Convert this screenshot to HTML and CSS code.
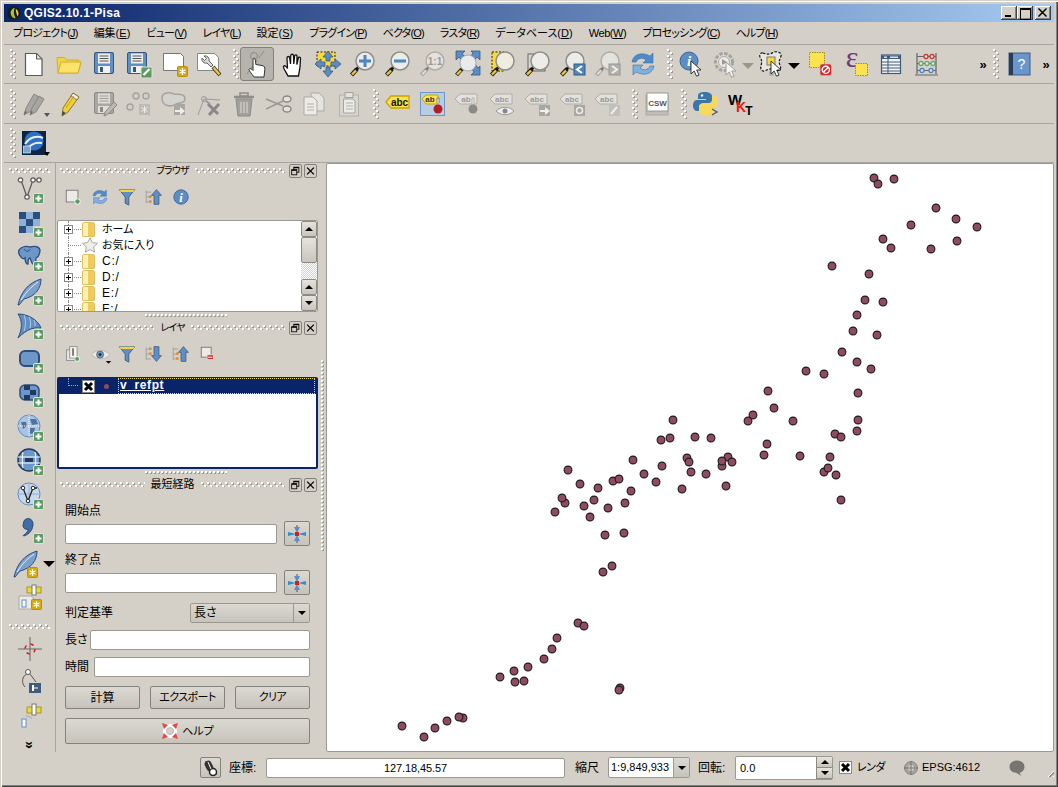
FILE: index.html
```html
<!DOCTYPE html>
<html lang="ja">
<head>
<meta charset="utf-8">
<title>QGIS2.10.1-Pisa</title>
<link rel="stylesheet" href="styles.css">
</head>
<body>
<svg class="defs" aria-hidden="true">
<defs>
<g id="g-plus"><rect x=".5" y=".5" width="10" height="10" rx="1.5" fill="#5b9a62" stroke="#d8e8d8"/><path d="M5.5 2.5v6M2.5 5.5h6" stroke="#fff" stroke-width="2"/></g>
<g id="g-star"><rect x=".5" y=".5" width="10" height="10" rx="1" fill="#d6a70e" stroke="#b8900c"/><path d="M5.5 2v7M2.5 3.7l6 3.6M8.500 3.700l-6 3.600" stroke="#fff" stroke-width="1.200"/></g>
<g id="g-floppy"><rect x="4.500" y="2.500" width="19" height="21" rx="1.500" fill="#5f8fc6" stroke="#36587f"/><rect x="8" y="3.500" width="12" height="10" fill="#eeeeea"/><path d="M9.500 6h9M9.500 8.500h9M9.500 11h9" stroke="#555"/><rect x="8" y="16" width="12" height="7" fill="#f2f2f2"/><rect x="10" y="17" width="3" height="5" fill="#36587f"/></g>
<g id="g-floppyg"><rect x="4.500" y="2.500" width="19" height="21" rx="1.500" fill="#a9a7a2" stroke="#8c8a86"/><rect x="8" y="3.500" width="12" height="10" fill="#dddbd5"/><path d="M9.500 6h9M9.500 8.500h9M9.500 11h9" stroke="#a09e99"/><rect x="8" y="16" width="12" height="7" fill="#e0ded8"/><rect x="10" y="17" width="3" height="5" fill="#8c8a86"/></g>
<g id="g-lens"><path d="M8 19L2.500 25" stroke="#222" stroke-width="4.200"/><path d="M7 20.500L3 24.500" stroke="#f2c63a" stroke-width="2.400"/><path d="M10 16.500L7.500 19.500" stroke="#111" stroke-width="2.800"/><circle cx="16" cy="11" r="9" fill="#ecece8" stroke="#8d8d8b" stroke-width="1.500"/></g>
<g id="g-lensg"><path d="M8 19L2.500 25" stroke="#999" stroke-width="4"/><path d="M7 20.500L3 24.500" stroke="#dedcd6" stroke-width="2.200"/><path d="M10 16.500L7.500 19.500" stroke="#777" stroke-width="2.500"/><circle cx="16" cy="11" r="9" fill="#e4e2dc" stroke="#b0aea9" stroke-width="1.500"/></g>
<g id="g-cursor"><path d="M0 0v13l3.200-3 2.300 5.200 2.500-1.100-2.300-5.100h4.300z" fill="#fff" stroke="#222" stroke-width=".9"/></g>
<g id="g-cursorg"><path d="M0 0v13l3.200-3 2.300 5.200 2.500-1.100-2.300-5.100h4.300z" fill="#f4f3f0" stroke="#999" stroke-width=".9"/></g>
<g id="g-tagg"><path d="M1 8l5-5h17v10H6z" fill="#e3e1db" stroke="#b0aea9"/></g>
</defs>
<symbol id="i-new" viewBox="0 0 28 28"><path d="M5.500 3.500h11l5.500 5.500v16.500H5.500z" fill="#fff" stroke="#5a5a5a" stroke-width="1.200"/><path d="M16.500 3.500V9H22z" fill="#ddd" stroke="#5a5a5a"/></symbol>
<symbol id="i-open" viewBox="0 0 28 28"><path d="M3 23L2 7.500h7.500l2 2.500h12l1 3H26l-3 10z" fill="#f4d347" stroke="#d2ae2c"/><path d="M3 23l3-11h20l-3 11z" fill="#fde36a" stroke="#d2ae2c"/></symbol>
<symbol id="i-save" viewBox="0 0 28 28"><use href="#g-floppy"/></symbol>
<symbol id="i-saveas" viewBox="0 0 28 28"><use href="#g-floppy" x="-2"/><rect x="16" y="17" width="11" height="11" rx="1.500" fill="#5b9a62" stroke="#d8e8d8"/><path d="M18.500 25l6-6" stroke="#fff" stroke-width="2.200"/></symbol>
<symbol id="i-newprint" viewBox="0 0 28 28"><path d="M3.500 3.500h17l3 3v14H3.500z" fill="#fff" stroke="#777"/><use href="#g-star" x="17" y="16"/></symbol>
<symbol id="i-composer" viewBox="0 0 28 28"><path d="M2.500 3.500h17l4 4v13h-21z" fill="#fff" stroke="#888"/><path d="M7 8a4 4 0 0 0 5 5l4 4 2-2-4-4a4 4 0 0 0-5-5l2.500 2.500-2 2z" fill="#dcdad4" stroke="#555" stroke-width=".9"/><path d="M18 17l7 8" stroke="#333" stroke-width="4"/><path d="M18.500 17.500l6 7" stroke="#f2c63a" stroke-width="2.300"/></symbol>
<symbol id="i-touch" viewBox="0 0 28 28"><path d="M4 24L14 10M16 8l5-7" stroke="#8d8a84"/><path d="M11 27c-2-3-5-6-5-7.500.500-1.500 2.500-1 4 1V9.500c0-1.700 2.500-1.700 2.500 0l.3 5 3.200.5 3 .5c2.500.5 3 2 2.800 4l-.8 7.500z" fill="#fff" stroke="#333"/><circle cx="11" cy="6" r="3.500" fill="none" stroke="#8d8a84"/></symbol>
<symbol id="i-pan" viewBox="0 0 28 28"><path d="M9 26C7 22 4 18 4.500 16.500c1-1.500 2.500-.5 4 2L8 8c0-2 2.500-2 2.700 0l.8 6 .2-8.500c.3-1.700 2.600-1.700 2.800 0l.3 8.500.8-8c.4-1.600 2.400-1.400 2.400.3l-.1 8.200 1.400-6.500c.4-1.500 2.300-1.100 2.200.5 0 4.500-.5 10.500-2 17.500z" fill="#fff" stroke="#111" stroke-width="1.300"/></symbol>
<symbol id="i-pansel" viewBox="0 0 28 28"><rect x="3" y="2" width="18" height="14" fill="#f7d93e" stroke="#222" stroke-dasharray="2 1.500"/><path d="M14 1l5 6h-3v4h-4V7H9z M14 27l5-6h-3v-4h-4v4H9z M1 14l6-5v3h4v4H7v3z M27 14l-6-5v3h-4v4h4v3z" fill="#5c8dc5" stroke="#36587f" stroke-width=".8"/></symbol>
<symbol id="i-zoomin" viewBox="0 0 28 28"><use href="#g-lens"/><path d="M16 5v12M10 11h12" stroke="#4a86c4" stroke-width="3"/></symbol>
<symbol id="i-zoomout" viewBox="0 0 28 28"><use href="#g-lens"/><path d="M10 11h12" stroke="#4a86c4" stroke-width="3"/></symbol>
<symbol id="i-zoom11" viewBox="0 0 28 28"><use href="#g-lensg"/></symbol>
<symbol id="i-full" viewBox="0 0 28 28"><path d="M2 1h9L8 4l4 3-4 4-3-4-3 3zM26 1v9l-3-3-3 4-4-4 3-4-2-2zM26 25h-9l3-3-3-4 4-4 3 4 2-2z" fill="#5c8dc5" stroke="#36587f" stroke-width=".8"/><path d="M8 19L2.500 25" stroke="#222" stroke-width="4"/><path d="M7 20.500L3 24.500" stroke="#f2c63a" stroke-width="2.300"/><circle cx="14" cy="13" r="8" fill="#e9ebec" stroke="#a8acb0"/></symbol>
<symbol id="i-zoomlayer" viewBox="0 0 28 28"><rect x="3" y="2" width="12" height="19" fill="#f7d93e" stroke="#222" stroke-dasharray="2 1.500"/><use href="#g-lens"/><circle cx="16" cy="11" r="8" fill="#f0eeda" opacity=".7"/></symbol>
<symbol id="i-zoomsel" viewBox="0 0 28 28"><rect x="4" y="4" width="17" height="17" fill="#d8d6d0" stroke="#666"/><use href="#g-lens"/></symbol>
<symbol id="i-zoomlast" viewBox="0 0 28 28"><use href="#g-lens"/><rect x="15" y="14" width="11" height="11" fill="#4d86c3" stroke="#36587f"/><path d="M23 16l-5 3.500 5 3.500" fill="none" stroke="#fff" stroke-width="2"/></symbol>
<symbol id="i-zoomnext" viewBox="0 0 28 28"><use href="#g-lensg"/><rect x="15" y="14" width="11" height="11" fill="#b3b1ac" stroke="#98968f"/><path d="M18 16l5 3.500-5 3.500" fill="none" stroke="#eee" stroke-width="2"/></symbol>
<symbol id="i-refresh" viewBox="0 0 28 28"><path d="M3 12C4 5 12 1 21 6l3-3v10H14l3-3c-4-3-8-2-10 2z" fill="#4f8ac9" stroke="#3a6fa5" stroke-width=".6"/><path d="M25 16c-1 7-9 11-18 6l-3 3V15h10l-3 3c4 3 8 2 10-2z" fill="#7fb0e0" stroke="#3a6fa5" stroke-width=".6"/></symbol>
<symbol id="i-action" viewBox="0 0 28 28"><circle cx="12" cy="12" r="8.500" fill="#dcdad4" stroke="#a5a39e" stroke-width="3" stroke-dasharray="3.500 1.500"/><circle cx="12" cy="12" r="5.500" fill="#ecebe7" stroke="#aaa"/><path d="M10 9l5 3-5 3z" fill="#999"/><use href="#g-cursorg" x="14" y="12"/></symbol>
<symbol id="i-select" viewBox="0 0 28 28"><path d="M5 3c5 2 8 1 11-1 4-1 8 1 7 4-1 4-3 5-1 9 2 4-1 7-5 5-4-2-7-1-10 1-3 1-5-2-4-5 1-4 1-6-1-9-1-2 1-5 3-4z" fill="#e8e6e0" stroke="#111" stroke-dasharray="2.500 1.500" stroke-width="1.200"/><rect x="9" y="7" width="8" height="8" fill="#f7d93e" stroke="#777"/><rect x="12" y="22" width="3" height="3" fill="none" stroke="#999"/><use href="#g-cursor" x="13" y="11"/></symbol>
<symbol id="i-deselect" viewBox="0 0 28 28"><rect x="2.500" y="2.500" width="15" height="15" fill="#fbe34f" stroke="#a58a18" stroke-dasharray="1.500 1"/><rect x="13" y="14" width="11.500" height="11.500" rx="2" fill="#d9262c" stroke="#c8c6c0" stroke-width=".6"/><circle cx="18.800" cy="19.800" r="3.600" fill="none" stroke="#fff" stroke-width="1.400"/><path d="M16.300 22.300l5-5" stroke="#fff" stroke-width="1.400"/></symbol>
<symbol id="i-table" viewBox="0 0 28 28"><rect x="4.500" y="5" width="19" height="18.500" fill="#f4f6f8" stroke="#3e5c7c" stroke-width="1.200"/><rect x="5" y="5.500" width="18" height="3.500" fill="#3e5c7c"/><path d="M5 12h18M5 15h18M5 18h18M5 21h18M11 9v14" stroke="#3e5c7c"/><rect x="7" y="6.500" width="3" height="1.500" fill="#dde"/><rect x="13" y="6.500" width="8" height="1.500" fill="#dde"/></symbol>
<symbol id="i-stats" viewBox="0 0 28 28"><path d="M5 3v21M24 3v21M3 25h23" stroke="#666" stroke-width="1.200" fill="none"/><path d="M5 6.500h19M5 13.500h19M5 20.500h19" stroke="#666"/><g fill="#e8e8e0" stroke-width="1.300"><circle cx="14" cy="6.500" r="2" stroke="#c23a3a"/><circle cx="20" cy="6.500" r="2" stroke="#c23a3a"/><circle cx="9" cy="13.500" r="2" stroke="#6ea86e"/><circle cx="15" cy="13.500" r="2" stroke="#6ea86e"/><circle cx="21" cy="13.500" r="2" stroke="#6ea86e"/><circle cx="10" cy="20.500" r="2" stroke="#4a86c4"/><circle cx="19" cy="20.500" r="2" stroke="#4a86c4"/></g></symbol>
<symbol id="i-digit" viewBox="0 0 28 28"><g fill="#a8a6a1" stroke="#8a8883"><path d="M4 25l2-7 8-14 5 3-8 14z"/><path d="M10 25l2-7 7-12 5 3-8 13z"/></g><path d="M4 25l1-4 2 1zM10 25l1-4 2 1z" fill="#666"/></symbol>
<symbol id="i-pencil" viewBox="0 0 28 28"><path d="M7 26l1-8L18 3l6 4-11 15z" fill="#f0ce3a" stroke="#8a7a30"/><path d="M18 3l6 4-2 3-6-4z" fill="#eee" stroke="#8a7a30"/><path d="M11 18l8-12" stroke="#c9a418"/><path d="M7 26l.600-5 3 2z" fill="#444"/></symbol>
<symbol id="i-saveedit" viewBox="0 0 28 28"><use href="#g-floppyg"/><path d="M14 26l1-4 9-10 3 3-9 9z" fill="#bbb9b4" stroke="#8a8883"/></symbol>
<symbol id="i-addpt" viewBox="0 0 28 28"><g fill="none" stroke="#a5a39e" stroke-width="1.400"><circle cx="11" cy="6" r="3"/><circle cx="21" cy="6" r="3"/><circle cx="5" cy="17" r="3"/></g><rect x="14" y="14" width="11" height="11" fill="#bdbbb6"/><path d="M19.500 16v7M16.500 17.500l6 4M22.500 17.500l-6 4" stroke="#eee"/></symbol>
<symbol id="i-addpoly" viewBox="0 0 28 28"><path d="M2 8c0-6 8-6 12-4 4 1 10-1 11 4 0 6-5 4-9 6-4 3-14 3-14-6z" fill="#d4d2cc" stroke="#a5a39e" stroke-width="1.500"/><rect x="14" y="14" width="11" height="11" fill="#a9a7a2"/><path d="M15 20h5v-3l5 4-5 4v-3h-5z" fill="#eee"/></symbol>
<symbol id="i-node" viewBox="0 0 28 28"><path d="M3 25L9 9l16 1" fill="none" stroke="#999"/><circle cx="9" cy="9" r="2.500" fill="none" stroke="#999"/><path d="M13 14l10 10M24 14L14 25" stroke="#888" stroke-width="3"/><path d="M11 11l4 3" stroke="#999" stroke-width="2"/></symbol>
<symbol id="i-trash" viewBox="0 0 28 28"><path d="M6 9h16l-2 17H8z" fill="#a3a19c" stroke="#888"/><path d="M4 7h20" stroke="#8f8d88" stroke-width="2.500"/><rect x="10" y="3" width="8" height="3" fill="none" stroke="#8f8d88" stroke-width="1.500"/><path d="M11 12v11M14 12v11M17 12v11" stroke="#d4d0c8" stroke-width="1.300"/></symbol>
<symbol id="i-scissors" viewBox="0 0 28 28"><path d="M1 9l17 7M1 19l17-8" stroke="#9b9994" stroke-width="1.500"/><g fill="#e4e2dc" stroke="#8a8883" stroke-width="1.400"><ellipse cx="22" cy="9" rx="4" ry="3"/><ellipse cx="22" cy="19" rx="4" ry="3"/></g></symbol>
<symbol id="i-copy" viewBox="0 0 28 28"><path d="M11 3h8l5 5v13H11z" fill="#e6e4de" stroke="#aaa"/><path d="M4 7h9l4 4v14H4z" fill="#ecebe6" stroke="#aaa"/><path d="M7 14h7M7 17h7M7 20h7" stroke="#b3b1ac"/></symbol>
<symbol id="i-paste" viewBox="0 0 28 28"><rect x="4.500" y="5" width="19" height="21" fill="#d8d6d0" stroke="#b3b1ac"/><rect x="10" y="2.500" width="8" height="5" fill="#e4e2dc" stroke="#a5a39e"/><path d="M8.500 9H18l2 2v12H8.500z" fill="#ecebe6" stroke="#a5a39e"/><path d="M11 13h7M11 16h7M11 19h7" stroke="#b3b1ac"/></symbol>
<symbol id="i-python" viewBox="0 0 28 28"><path d="M13 2c-5 0-7 1-7 4v3h8v1H5c-3 0-4 3-4 6s2 5 4 5h2v-4c0-2 2-4 4-4h6c2 0 3-1 3-3V6c0-2-3-4-7-4z" fill="#3c75a8"/><path d="M14 25c5 0 7-1 7-4v-3h-8v-1h9c3 0 4-3 4-6s-2-5-4-5h-2v4c0 2-2 4-4 4h-6c-2 0-3 1-3 3v4c0 2 3 4 7 4z" fill="#f8d95a"/><circle cx="10" cy="5.500" r="1.200" fill="#fff"/><path d="M20 19l5 3-5 3" fill="none" stroke="#555" stroke-width="1.300"/></symbol>
<symbol id="i-ge" viewBox="0 0 28 28"><rect x="2" y="2" width="24" height="24" fill="#0b2543"/><circle cx="14" cy="12" r="9.500" fill="#2f6fc4"/><path d="M5 15c5-7 12-9 18-6M7 20c4-5 10-7 15-6" fill="none" stroke="#e8f0f8" stroke-width="2"/><rect x="3.500" y="17" width="7" height="7" fill="#7ba3d2" stroke="#fff" stroke-width=".6"/></symbol>
<symbol id="i-ogr" viewBox="0 0 28 28"><g fill="#fff" stroke="#555" stroke-width="1.200"><path d="M5 4l6 17 6-17 5 0" fill="none"/><circle cx="4.500" cy="4" r="2.200"/><circle cx="17" cy="4" r="2.200"/><circle cx="23" cy="4" r="2.200"/><circle cx="11" cy="21" r="2.200"/></g><use href="#g-plus" x="17" y="17"/></symbol>
<symbol id="i-raster" viewBox="0 0 28 28"><g fill="#2b4f7c"><rect x="3" y="2" width="7" height="7"/><rect x="17" y="2" width="7" height="7"/><rect x="10" y="9" width="7" height="7"/><rect x="3" y="16" width="7" height="7"/></g><g fill="#8fb0d8"><rect x="10" y="2" width="7" height="7"/><rect x="3" y="9" width="7" height="7"/><rect x="17" y="9" width="7" height="7"/><rect x="10" y="16" width="7" height="7"/></g><use href="#g-plus" x="17" y="17"/></symbol>
<symbol id="i-pg" viewBox="0 0 28 28"><path d="M3 6c3-4 8-4 11-3 4-1 9-1 10 3 0 5-2 7-4 8 0 3-1 6-3 6-1 0-2-4-3-6-2 0-2 4-2 6-1 1-3-2-3-6-1 1-3 1-4-1-2-2-3-4-2-7z" fill="#6d97c9" stroke="#2e4d78" stroke-width="1.300"/><path d="M8 5c2 3 5 3 6 0" fill="none" stroke="#2e4d78"/><use href="#g-plus" x="17" y="17"/></symbol>
<symbol id="i-spatialite" viewBox="0 0 28 28"><path d="M2 27C5 14 12 5 25 1c0 9-5 17-17 20l-5 6z" fill="#7aa0cd" stroke="#2e4d78"/><path d="M5 22C10 14 15 9 22 4" stroke="#e8eef6" fill="none"/><use href="#g-plus" x="17" y="17"/></symbol>
<symbol id="i-mssql" viewBox="0 0 28 28"><path d="M2 2c10 0 20 6 23 14-7-1-14 1-23 10 4-8 5-17 0-24z" fill="#5f8fc6" stroke="#2e4d78"/><path d="M8 3c2 5 2 10 0 16M13 5c2 4 2 7 1 11M18 8c1 2 1 4 1 6" stroke="#b8cde2" fill="none"/><use href="#g-plus" x="17" y="17"/></symbol>
<symbol id="i-oracle" viewBox="0 0 28 28"><rect x="4" y="5" width="19" height="15" rx="5" fill="#6d97c9" stroke="#2e4d78" stroke-width="2"/><use href="#g-plus" x="17" y="17"/></symbol>
<symbol id="i-wms" viewBox="0 0 28 28"><rect x="4" y="5" width="19" height="15" rx="5" fill="#6d97c9" stroke="#2e4d78" stroke-width="1.500"/><g fill="#1f3a5e"><rect x="8" y="5" width="6" height="5"/><rect x="14" y="10" width="6" height="5"/><rect x="8" y="15" width="6" height="5"/></g><use href="#g-plus" x="17" y="17"/></symbol>
<symbol id="i-wcs" viewBox="0 0 28 28"><circle cx="13" cy="12" r="11" fill="#a9c4e2" stroke="#5c8dc5"/><path d="M5 8h5l1 4-4 3zM14 5h6l2 5-6 1zM14 14h5l-1 5-4 1z" fill="#3b5f8a" opacity=".8"/><path d="M2 12h22M13 1v22" stroke="#fff" stroke-dasharray="1 1"/><use href="#g-plus" x="17" y="17"/></symbol>
<symbol id="i-wfs" viewBox="0 0 28 28"><circle cx="13" cy="12" r="11" fill="#6d97c9" stroke="#1f3a5e" stroke-width="1.500"/><path d="M2 9h22M2 15h22M7 4c-1 5-1 11 0 16M19 4c1 5 1 11 0 16" stroke="#fff" fill="none"/><rect x="9" y="10" width="8" height="4" fill="#1f3a5e"/><use href="#g-plus" x="17" y="17"/></symbol>
<symbol id="i-gdalv" viewBox="0 0 28 28"><circle cx="13" cy="12" r="11" fill="#c9d9ec" stroke="#5c8dc5"/><path d="M2 12h22M13 1v22" stroke="#8fb0d8"/><path d="M7 6l5 13 5-13 4 0" fill="none" stroke="#222" stroke-width="1.300"/><g fill="#fff" stroke="#222"><circle cx="7" cy="6" r="1.800"/><circle cx="17" cy="6" r="1.800"/><circle cx="12" cy="19" r="1.800"/></g><use href="#g-plus" x="17" y="17"/></symbol>
<symbol id="i-comma" viewBox="0 0 28 28"><path d="M8 5c2-4 9-3 9 3 0 5-3 10-9 12-1 0-1-1 0-1 3-2 4-4 4-6-3 1-5-1-5-4z" fill="#3f6ea6" stroke="#2e4d78"/><use href="#g-plus" x="17" y="17"/></symbol>
<symbol id="i-newshp" viewBox="0 0 28 28"><path d="M2 27C5 14 12 5 25 1c0 9-5 17-17 20l-5 6z" fill="#7aa0cd" stroke="#2e4d78"/><path d="M5 22C10 14 15 9 22 4" stroke="#e8eef6" fill="none"/><use href="#g-star" x="15" y="17"/></symbol>
<symbol id="i-newvirt" viewBox="0 0 28 28"><path d="M3 12h12l3 3v10H3z" fill="#ecebe6" stroke="#aaa"/><rect x="11" y="3" width="14" height="6" fill="#e9d83a" stroke="#a89a20"/><rect x="16" y="1" width="4" height="10" fill="#fff" stroke="#777"/><rect x="6" y="16" width="4" height="7" fill="#fff" stroke="#5c8dc5"/><use href="#g-star" x="15" y="15"/></symbol>
<symbol id="i-cross" viewBox="0 0 28 28"><path d="M2 14h24M14 2v24" stroke="#666"/><circle cx="14" cy="14" r="5" fill="none" stroke="#d02020" stroke-width="1.500" stroke-dasharray="3.500 4.300"/></symbol>
<symbol id="i-vertex" viewBox="0 0 28 28"><path d="M11 6c-5 2-6 9-2 13M14 6l6 8" fill="none" stroke="#555"/><circle cx="12" cy="4" r="2.500" fill="#fff" stroke="#555"/><rect x="13" y="15" width="12" height="10" fill="#3e5c7c"/><path d="M16 20h6" stroke="#fff"/><rect x="16" y="17" width="2" height="6" fill="#fff"/></symbol>
<symbol id="i-tag" viewBox="0 0 28 28"><rect x="11" y="6" width="14" height="6" fill="#e9d83a" stroke="#a89a20"/><rect x="16" y="3" width="4" height="11" fill="#fff" stroke="#777"/><path d="M10 15c3 0 5 1 6 3" fill="none" stroke="#aaa"/><rect x="6" y="18" width="4" height="8" fill="#fff" stroke="#5c8dc5"/></symbol>
<symbol id="s-new" viewBox="0 0 20 20"><rect x="2.500" y="2.500" width="13" height="13" fill="#eceae5" stroke="#777"/><circle cx="15" cy="15" r="3" fill="#5b9a62" stroke="#fff"/></symbol>
<symbol id="s-refresh" viewBox="0 0 28 28"><use href="#i-refresh"/></symbol>
<symbol id="s-filter" viewBox="0 0 20 20"><path d="M1.500 2h17L12 10v9l-4-2v-7z" fill="#5f8fc6" stroke="#3e5c7c"/><path d="M1.500 2h17l-1.500 2.500H3z" fill="#f4d347"/></symbol>
<symbol id="s-up" viewBox="0 0 22 20"><path d="M1.500 2v15M1.500 4h6M1.500 10h6M1.500 16h6" stroke="#999" fill="none"/><g fill="#f08a1a"><rect x="5" y="8" width="3" height="3"/><rect x="5" y="14" width="3" height="3"/></g><path d="M14 1l6 7h-3v11h-6V8H8z" fill="#5f8fc6" stroke="#3e5c7c"/></symbol>
<symbol id="s-down" viewBox="0 0 22 20"><path d="M1.500 2v15M1.500 4h6M1.500 10h6M1.500 16h6" stroke="#999" fill="none"/><g fill="#f08a1a"><rect x="5" y="2" width="3" height="3"/><rect x="5" y="8" width="3" height="3"/></g><path d="M14 19l6-7h-3V1h-6v11H8z" fill="#5f8fc6" stroke="#3e5c7c"/></symbol>
<symbol id="s-addgroup" viewBox="0 0 22 22"><rect x="3" y="6" width="10" height="13" fill="#e6e4de" stroke="#888"/><rect x="7" y="2" width="9" height="14" fill="#f4f3ef" stroke="#888"/><path d="M11 4v9" stroke="#666" stroke-width="2"/><circle cx="16" cy="17" r="3" fill="#5b9a62" stroke="#fff"/></symbol>
<symbol id="s-eye" viewBox="0 0 30 22"><path d="M1 9c7-8 19-8 26 0-7 8-19 8-26 0z" fill="#eceae5" stroke="#aaa"/><circle cx="13" cy="9" r="5" fill="#6d97c9" stroke="#555"/><circle cx="13" cy="9" r="2" fill="#222"/><path d="M21 18h8l-4 4z" fill="#111"/></symbol>
<symbol id="s-remove" viewBox="0 0 20 20"><rect x="2.500" y="2.500" width="11" height="11" fill="#eceae5" stroke="#777"/><rect x="9" y="11" width="7" height="5" fill="#d9262c" stroke="#fff" stroke-width=".6"/><rect x="10" y="13" width="5" height="1.200" fill="#fff"/></symbol>
<symbol id="s-pick" viewBox="0 0 20 20"><path d="M10 1v6M10 13v6" stroke="#555"/><path d="M7 3h6l-3 6zM7 17h6l-3-6z" fill="#5c8dc5"/><path d="M1 8l8 2-8 2zM19 8l-8 2 8 2z" fill="#2f8fd0"/><rect x="8" y="8" width="4" height="4" fill="#d02020"/></symbol>
<symbol id="s-buoy" viewBox="0 0 18 18"><circle cx="9" cy="9" r="7" fill="#fff"/><g fill="#e64848"><path d="M1 1l6 2-4 4zM17 1l-6 2 4 4zM1 17l6-2-4-4zM17 17l-6-2 4-4z"/></g><circle cx="9" cy="9" r="3.500" fill="#d4d0c8" stroke="#bbb"/></symbol>
<symbol id="s-mouse" viewBox="0 0 18 18"><path d="M3 2l12 14" stroke="#777"/><rect x="3.500" y="1.500" width="7" height="11" rx="3.500" transform="rotate(-25 7 7)" fill="#333"/><circle cx="11" cy="13" r="3.500" fill="#fff" stroke="#222" stroke-width="1.500"/><path d="M6 3l3 7" stroke="#fff"/></symbol>
<symbol id="s-crs" viewBox="0 0 16 16"><circle cx="8" cy="8" r="6.500" fill="#a5a39e" stroke="#888"/><circle cx="8" cy="8" r="3" fill="#d4d0c8"/><path d="M1 8h14M8 1v14" stroke="#77756f"/></symbol>
<symbol id="s-bubble" viewBox="0 0 18 18"><path d="M9 1.500c4.500 0 7.500 2.800 7.500 6.300 0 3.300-2.500 5.700-5 6l2 3.200-5-3.100C4 13.500 1.500 11.300 1.500 7.800 1.500 4.300 4.500 1.500 9 1.500z" fill="#77756f"/></symbol>
<symbol id="s-x" viewBox="0 0 13 13"><rect x=".5" y=".5" width="12" height="12" fill="#fff" stroke="#888"/><path d="M3 3l7 7M10 3l-7 7" stroke="#000" stroke-width="3"/></symbol>
<symbol id="s-star" viewBox="0 0 16 16"><path d="M8 .8l2.300 4.800 5.200.7-3.800 3.600.9 5.200L8 12.600l-4.600 2.500.9-5.200L.5 6.300l5.200-.7z" fill="#efeee9" stroke="#aaa8a2"/></symbol>
<symbol id="s-float" viewBox="0 0 13 13"><rect x="4.500" y="2" width="6" height="6" fill="none" stroke="#000"/><path d="M4.500 2.500h6" stroke="#000" stroke-width="1.500"/><rect x="2" y="5" width="6" height="6" fill="#d4d0c8" stroke="#000"/><path d="M2 5.500h6" stroke="#000" stroke-width="1.500"/></symbol>
<symbol id="s-close" viewBox="0 0 13 13"><path d="M2.500 2.500l8 8M10.500 2.500l-8 8" stroke="#000" stroke-width="1.500"/></symbol>
<symbol id="s-logo" viewBox="0 0 16 16"><circle cx="8" cy="8" r="7.500" fill="#1a1a1a"/><path d="M9 2c-4 1-6 5-4 9 1 2 3 3 5 3-2-3-3-8-1-12z" fill="#9cc83c"/><path d="M10 3c3 2 4 6 2 9-1-3-2-6-2-9z" fill="#f0d030"/></symbol>
</svg>

<div class="window">
  <header class="titlebar">
    <svg class="logo"><use href="#s-logo"/></svg>
    <span class="title-text">QGIS2.10.1-Pisa</span>
    <span class="wbtns">
      <span class="wbtn wmin"></span>
      <span class="wbtn wmax"></span>
      <span class="wbtn wclose"><svg class="wx"><use href="#s-close"/></svg></span>
    </span>
  </header>
  <nav class="menubar">
    <span>プロジェクト(<u>J</u>)</span><span class="wide">編集(<u>E</u>)</span><span>ビュー(<u>V</u>)</span><span>レイヤ(<u>L</u>)</span><span class="wide">設定(<u>S</u>)</span><span>プラグイン(<u>P</u>)</span><span>ベクタ(<u>O</u>)</span><span>ラスタ(<u>R</u>)</span><span class="wide">データベース(<u>D</u>)</span><span class="mid">Web(<u>W</u>)</span><span>プロセッシング(<u>C</u>)</span><span>ヘルプ(<u>H</u>)</span>
  </nav>

  <div class="toolbar">
    <i class="hgrip first"></i>
    <button class="tb"><svg class="ic"><use href="#i-new"/></svg></button>
    <button class="tb"><svg class="ic"><use href="#i-open"/></svg></button>
    <button class="tb"><svg class="ic"><use href="#i-save"/></svg></button>
    <button class="tb"><svg class="ic"><use href="#i-saveas"/></svg></button>
    <button class="tb"><svg class="ic"><use href="#i-newprint"/></svg></button>
    <button class="tb"><svg class="ic"><use href="#i-composer"/></svg></button>
    <i class="hgrip"></i>
    <button class="tb on"><svg class="ic"><use href="#i-touch"/></svg></button>
    <button class="tb"><svg class="ic"><use href="#i-pan"/></svg></button>
    <button class="tb"><svg class="ic"><use href="#i-pansel"/></svg></button>
    <button class="tb"><svg class="ic"><use href="#i-zoomin"/></svg></button>
    <button class="tb"><svg class="ic"><use href="#i-zoomout"/></svg></button>
    <button class="tb"><svg class="ic" viewBox="0 0 28 28"><use href="#i-zoom11"/><text x="16" y="14.500" class="svgt g11">1:1</text></svg></button>
    <button class="tb"><svg class="ic"><use href="#i-full"/></svg></button>
    <button class="tb"><svg class="ic"><use href="#i-zoomlayer"/></svg></button>
    <button class="tb"><svg class="ic"><use href="#i-zoomsel"/></svg></button>
    <button class="tb"><svg class="ic"><use href="#i-zoomlast"/></svg></button>
    <button class="tb"><svg class="ic"><use href="#i-zoomnext"/></svg></button>
    <button class="tb"><svg class="ic"><use href="#i-refresh"/></svg></button>
    <i class="hgrip"></i>
    <button class="tb"><svg class="ic" viewBox="0 0 28 28"><circle cx="11" cy="11" r="9" fill="#5c8dc5" stroke="#3d6595"/><text x="11" y="16" class="svgt it">i</text><use href="#g-cursor" x="13" y="11"/></svg></button>
    <button class="tb tb-drop"><svg class="ic"><use href="#i-action"/></svg><i class="arrow arrow-g"></i></button>
    <button class="tb tb-drop tb-drop2"><svg class="ic"><use href="#i-select"/></svg><i class="arrow"></i></button>
    <button class="tb"><svg class="ic"><use href="#i-deselect"/></svg></button>
    <button class="tb"><svg class="ic" viewBox="0 0 28 28"><text x="10" y="17" class="svgt ex">ε</text><rect x="13.500" y="13.500" width="12" height="12" fill="#fbe34f" stroke="#a58a18" stroke-dasharray="1.500 1"/></svg></button>
    <button class="tb"><svg class="ic"><use href="#i-table"/></svg></button>
    <button class="tb"><svg class="ic"><use href="#i-stats"/></svg></button>
    <span class="more more-a">»</span>
    <i class="hgrip hgrip-tight"></i>
    <button class="tb tb-help"><svg class="ic" viewBox="0 0 28 28"><rect x="4" y="3" width="21" height="22" fill="#6a96cb" stroke="#3c5f88"/><rect x="4" y="3" width="4" height="22" fill="#2b3c52"/><text x="16.500" y="19" class="svgt hq">?</text></svg></button>
    <span class="more more-b">»</span>
  </div>

  <div class="toolbar toolbar-tall">
    <i class="hgrip first"></i>
    <button class="tb"><svg class="ic"><use href="#i-digit"/></svg><i class="tiny-arrow"></i></button>
    <button class="tb"><svg class="ic"><use href="#i-pencil"/></svg></button>
    <button class="tb"><svg class="ic"><use href="#i-saveedit"/></svg></button>
    <button class="tb"><svg class="ic"><use href="#i-addpt"/></svg></button>
    <button class="tb"><svg class="ic"><use href="#i-addpoly"/></svg></button>
    <button class="tb"><svg class="ic"><use href="#i-node"/></svg></button>
    <button class="tb"><svg class="ic"><use href="#i-trash"/></svg></button>
    <button class="tb"><svg class="ic"><use href="#i-scissors"/></svg></button>
    <button class="tb"><svg class="ic"><use href="#i-copy"/></svg></button>
    <button class="tb"><svg class="ic"><use href="#i-paste"/></svg></button>
    <i class="hgrip"></i>
    <button class="tb"><svg class="ic" viewBox="0 0 28 28"><path d="M2 12l5-6h18v12H7z" fill="#fbe34f" stroke="#c9a400" stroke-width="1.300"/><text x="15.500" y="15.500" class="svgt lb">abc</text></svg></button>
    <button class="tb"><svg class="ic" viewBox="0 0 28 28"><rect x="1.500" y="2.500" width="24" height="23" fill="#b8cde2" stroke="#6d97c9"/><path d="M3 9l4-4h12v9H7z" fill="#fbe34f" stroke="#c9a400"/><text x="11" y="12" class="svgt ls">ab</text><path d="M18 13V8h2v5" fill="#fff" stroke="#555" stroke-width=".7"/><circle cx="19" cy="19" r="4.500" fill="#b21e24"/></svg></button>
    <button class="tb"><svg class="ic" viewBox="0 0 28 28"><use href="#g-tagg" y="1"/><text x="12" y="12" class="svgt lg">ab</text><path d="M18 14V8h2v6" fill="#eee" stroke="#999" stroke-width=".7"/><circle cx="19" cy="19" r="4.500" fill="#8c8a86"/></svg></button>
    <button class="tb"><svg class="ic" viewBox="0 0 28 28"><use href="#g-tagg" y="1"/><text x="13" y="12" class="svgt lg">abc</text><path d="M7 21c5-5 13-5 18 0-5 5-13 5-18 0z" fill="#eee" stroke="#999"/><circle cx="16" cy="21" r="2.500" fill="#888"/></svg></button>
    <button class="tb"><svg class="ic" viewBox="0 0 28 28"><use href="#g-tagg" y="1"/><text x="13" y="12" class="svgt lg">abc</text><rect x="15" y="15" width="11" height="11" fill="#a9a7a2"/><path d="M16 20h5v-3l5 4-5 4v-3h-5z" fill="#eee"/></svg></button>
    <button class="tb"><svg class="ic" viewBox="0 0 28 28"><use href="#g-tagg" y="1"/><text x="13" y="12" class="svgt lg">abc</text><rect x="15" y="15" width="11" height="11" fill="#a9a7a2"/><circle cx="20.500" cy="20.500" r="3" fill="none" stroke="#eee" stroke-width="1.500"/></svg></button>
    <button class="tb"><svg class="ic" viewBox="0 0 28 28"><use href="#g-tagg" y="1"/><text x="13" y="12" class="svgt lg">abc</text><rect x="15" y="15" width="11" height="11" fill="#c2c0bb"/><path d="M17 24l6-7" stroke="#eee" stroke-width="2"/></svg></button>
    <i class="hgrip"></i>
    <button class="tb"><svg class="ic" viewBox="0 0 28 28"><rect x="3" y="5" width="22" height="20" fill="#c0bdb7" stroke="#aaa"/><rect x="4" y="3" width="21" height="18" fill="#fff" stroke="#9a9890"/><text x="14.500" y="15.500" class="svgt cs">CSW</text></svg></button>
    <i class="hgrip"></i>
    <button class="tb"><svg class="ic"><use href="#i-python"/></svg></button>
    <button class="tb"><svg class="ic" viewBox="0 0 28 28"><text x="8" y="15" class="svgt wk wk1">W</text><text x="14" y="22" class="svgt wk wk2">K</text><text x="22" y="25" class="svgt wk wk3">T</text></svg></button>
  </div>

  <div class="toolbar">
    <i class="hgrip first"></i>
    <button class="tb"><svg class="ic"><use href="#i-ge"/></svg><i class="tiny-arrow tiny-dark"></i></button>
  </div>

  <main class="main">
    <aside class="lefttools">
      <i class="tgrip"></i>
      <button class="lt"><svg class="ic"><use href="#i-ogr"/></svg></button>
      <button class="lt"><svg class="ic"><use href="#i-raster"/></svg></button>
      <button class="lt"><svg class="ic"><use href="#i-pg"/></svg></button>
      <button class="lt"><svg class="ic"><use href="#i-spatialite"/></svg></button>
      <button class="lt"><svg class="ic"><use href="#i-mssql"/></svg></button>
      <button class="lt"><svg class="ic"><use href="#i-oracle"/></svg></button>
      <button class="lt"><svg class="ic"><use href="#i-wms"/></svg></button>
      <button class="lt"><svg class="ic"><use href="#i-wcs"/></svg></button>
      <button class="lt"><svg class="ic"><use href="#i-wfs"/></svg></button>
      <button class="lt"><svg class="ic"><use href="#i-gdalv"/></svg></button>
      <button class="lt"><svg class="ic"><use href="#i-comma"/></svg></button>
      <button class="lt lt-drop"><svg class="ic"><use href="#i-newshp"/></svg><i class="arrow"></i></button>
      <button class="lt"><svg class="ic"><use href="#i-newvirt"/></svg></button>
      <i class="tgrip tgrip-2"></i>
      <button class="lt lt-s"><svg class="ic"><use href="#i-cross"/></svg></button>
      <button class="lt lt-s"><svg class="ic"><use href="#i-vertex"/></svg></button>
      <button class="lt lt-s"><svg class="ic"><use href="#i-tag"/></svg></button>
      <span class="lt-more">»</span>
    </aside>

    <div class="docks">
      <section class="dock dock-browser">
        <div class="dock-title"><i class="dgrip"></i><span class="kana">ブラウザ</span><i class="dgrip"></i><span class="dbtns"><span class="dbtn"><svg><use href="#s-float"/></svg></span><span class="dbtn"><svg><use href="#s-close"/></svg></span></span></div>
        <div class="dock-tools">
          <button class="dt"><svg class="ds"><use href="#s-new"/></svg></button>
          <button class="dt"><svg class="ds"><use href="#s-refresh"/></svg></button>
          <button class="dt"><svg class="ds"><use href="#s-filter"/></svg></button>
          <button class="dt"><svg class="ds"><use href="#s-up"/></svg></button>
          <button class="dt"><svg class="ds" viewBox="0 0 20 20"><circle cx="10" cy="10" r="8" fill="#5c8dc5" stroke="#3d6595"/><text x="10" y="15" class="svgt it2">i</text></svg></button>
        </div>
        <div class="tree">
          <div class="tree-rows">
            <div class="row"><span class="twig"><b class="exp"></b></span><i class="folder"></i>ホーム</div>
            <div class="row"><span class="twig"></span><svg class="star"><use href="#s-star"/></svg>お気に入り</div>
            <div class="row row-lat"><span class="twig"><b class="exp"></b></span><i class="folder"></i>C:/</div>
            <div class="row row-lat"><span class="twig"><b class="exp"></b></span><i class="folder"></i>D:/</div>
            <div class="row row-lat"><span class="twig"><b class="exp"></b></span><i class="folder"></i>E:/</div>
            <div class="row row-lat"><span class="twig"><b class="exp"></b></span><i class="folder"></i>F:/</div>
          </div>
          <div class="vscroll">
            <span class="sbtn"><i class="up"></i></span>
            <span class="thumb"></span>
            <span class="track"></span>
            <span class="sbtn"><i class="up"></i></span>
            <span class="sbtn"><i class="down"></i></span>
          </div>
        </div>
      </section>
      <i class="dock-sep"></i>
      <section class="dock dock-layers">
        <div class="dock-title"><i class="dgrip"></i><span class="kana">レイヤ</span><i class="dgrip"></i><span class="dbtns"><span class="dbtn"><svg><use href="#s-float"/></svg></span><span class="dbtn"><svg><use href="#s-close"/></svg></span></span></div>
        <div class="dock-tools">
          <button class="dt"><svg class="ds"><use href="#s-addgroup"/></svg></button>
          <button class="dt"><svg class="ds ds-w"><use href="#s-eye"/></svg></button>
          <button class="dt"><svg class="ds"><use href="#s-filter"/></svg></button>
          <button class="dt"><svg class="ds"><use href="#s-down"/></svg></button>
          <button class="dt"><svg class="ds"><use href="#s-up"/></svg></button>
          <button class="dt"><svg class="ds"><use href="#s-remove"/></svg></button>
        </div>
        <div class="layer-tree">
          <div class="layer-row">
            <i class="layer-twig"></i>
            <svg class="check"><use href="#s-x"/></svg>
            <i class="marker"></i>
            <span class="layer-name">v_refpt</span>
          </div>
        </div>
      </section>
      <i class="dock-sep"></i>
      <section class="dock dock-route">
        <div class="dock-title"><i class="dgrip"></i><span class="kanji">最短経路</span><i class="dgrip"></i><span class="dbtns"><span class="dbtn"><svg><use href="#s-float"/></svg></span><span class="dbtn"><svg><use href="#s-close"/></svg></span></span></div>
        <form class="route">
          <label class="f-label">開始点</label>
          <div class="pick-row"><input class="field"><button type="button" class="btn pick"><svg class="pk"><use href="#s-pick"/></svg></button></div>
          <label class="f-label f-label2">終了点</label>
          <div class="pick-row"><input class="field"><button type="button" class="btn pick"><svg class="pk"><use href="#s-pick"/></svg></button></div>
          <div class="crit-row"><span>判定基準</span><span class="combo combo-crit"><span class="combo-text">長さ</span><span class="combo-arrow"><i class="down"></i></span></span></div>
          <div class="val-row"><span class="val-a">長さ</span><input class="field"></div>
          <div class="val-row"><span class="val-b">時間</span><input class="field"></div>
          <div class="btn-row"><button type="button" class="btn">計算</button><button type="button" class="btn btn-kana">エクスポート</button><button type="button" class="btn btn-kana">クリア</button></div>
          <button type="button" class="btn btn-help"><svg class="buoy"><use href="#s-buoy"/></svg>ヘルプ</button>
        </form>
      </section>
    </div>

    <div class="splitter"><i class="vgrip"></i></div>

    <div class="canvas">
      <svg class="map" viewBox="326 163 727 589">
        <g class="pts">
<circle cx="874" cy="178" r="3.900"/><circle cx="878" cy="184" r="3.900"/><circle cx="894" cy="179" r="3.900"/><circle cx="936" cy="208" r="3.900"/><circle cx="956" cy="219" r="3.900"/><circle cx="977" cy="227" r="3.900"/><circle cx="911" cy="225" r="3.900"/><circle cx="883" cy="239" r="3.900"/><circle cx="891" cy="248" r="3.900"/><circle cx="931" cy="249" r="3.900"/><circle cx="957" cy="241" r="3.900"/><circle cx="832" cy="266" r="3.900"/><circle cx="869" cy="274" r="3.900"/><circle cx="865" cy="300" r="3.900"/><circle cx="883" cy="302" r="3.900"/><circle cx="857" cy="315" r="3.900"/><circle cx="853" cy="331" r="3.900"/><circle cx="877" cy="335" r="3.900"/><circle cx="842" cy="352" r="3.900"/><circle cx="857" cy="362" r="3.900"/><circle cx="871" cy="369" r="3.900"/><circle cx="806" cy="371" r="3.900"/><circle cx="824" cy="374" r="3.900"/><circle cx="768" cy="391" r="3.900"/><circle cx="858" cy="393" r="3.900"/>
<circle cx="673" cy="420" r="3.900"/><circle cx="774" cy="408" r="3.900"/><circle cx="753" cy="415" r="3.900"/><circle cx="748" cy="421" r="3.900"/><circle cx="793" cy="421" r="3.900"/><circle cx="858" cy="420" r="3.900"/><circle cx="857" cy="431" r="3.900"/><circle cx="835" cy="434" r="3.900"/><circle cx="841" cy="437" r="3.900"/><circle cx="661" cy="440" r="3.900"/><circle cx="670" cy="438" r="3.900"/><circle cx="695" cy="437" r="3.900"/><circle cx="711" cy="438" r="3.900"/><circle cx="767" cy="444" r="3.900"/><circle cx="764" cy="455" r="3.900"/><circle cx="800" cy="456" r="3.900"/><circle cx="830" cy="457" r="3.900"/><circle cx="687" cy="458" r="3.900"/><circle cx="689" cy="462" r="3.900"/><circle cx="728" cy="457" r="3.900"/><circle cx="732" cy="462" r="3.900"/><circle cx="722" cy="466" r="3.900"/><circle cx="722" cy="461" r="3.900"/><circle cx="633" cy="460" r="3.900"/><circle cx="568" cy="470" r="3.900"/><circle cx="662" cy="466" r="3.900"/><circle cx="644" cy="474" r="3.900"/><circle cx="691" cy="472" r="3.900"/><circle cx="706" cy="474" r="3.900"/><circle cx="824" cy="472" r="3.900"/><circle cx="828" cy="468" r="3.900"/><circle cx="836" cy="475" r="3.900"/><circle cx="580" cy="484" r="3.900"/><circle cx="598" cy="488" r="3.900"/><circle cx="613" cy="481" r="3.900"/><circle cx="619" cy="479" r="3.900"/><circle cx="656" cy="482" r="3.900"/><circle cx="682" cy="489" r="3.900"/><circle cx="726" cy="486" r="3.900"/><circle cx="631" cy="491" r="3.900"/><circle cx="565" cy="503" r="3.900"/><circle cx="562" cy="498" r="3.900"/><circle cx="594" cy="500" r="3.900"/><circle cx="625" cy="503" r="3.900"/><circle cx="584" cy="506" r="3.900"/><circle cx="608" cy="508" r="3.900"/><circle cx="555" cy="512" r="3.900"/><circle cx="590" cy="517" r="3.900"/><circle cx="605" cy="535" r="3.900"/><circle cx="624" cy="533" r="3.900"/><circle cx="612" cy="566" r="3.900"/><circle cx="603" cy="572" r="3.900"/><circle cx="841" cy="500" r="3.900"/>
<circle cx="578" cy="623" r="3.900"/><circle cx="584" cy="626" r="3.900"/><circle cx="557" cy="638" r="3.900"/><circle cx="552" cy="649" r="3.900"/><circle cx="544" cy="659" r="3.900"/><circle cx="528" cy="667" r="3.900"/><circle cx="514" cy="671" r="3.900"/><circle cx="500" cy="677" r="3.900"/><circle cx="515" cy="682" r="3.900"/><circle cx="524" cy="681" r="3.900"/><circle cx="620" cy="688" r="3.900"/><circle cx="619" cy="690" r="3.900"/><circle cx="402" cy="726" r="3.900"/><circle cx="424" cy="737" r="3.900"/><circle cx="435" cy="728" r="3.900"/><circle cx="447" cy="721" r="3.900"/><circle cx="463" cy="718" r="3.900"/><circle cx="459" cy="717" r="3.900"/>
        </g>
      </svg>
    </div>
  </main>

  <footer class="status">
    <button class="btn st-toggle"><svg class="st-icon"><use href="#s-mouse"/></svg></button>
    <span class="st-label st-label-a">座標:</span>
    <div class="st-coord">127.18,45.57</div>
    <span class="st-label st-label-b">縮尺</span>
    <span class="combo combo-scale"><span class="combo-text">1:9,849,933</span><span class="combo-arrow"><i class="down"></i></span></span>
    <span class="st-label st-label-c">回転:</span>
    <span class="spin"><span class="spin-val">0.0</span><span class="spin-btns"><span class="sb"><i class="up"></i></span><span class="sb"><i class="down"></i></span></span></span>
    <svg class="st-check"><use href="#s-x"/></svg>
    <span class="st-label st-label-d">レンダ</span>
    <svg class="st-crs"><use href="#s-crs"/></svg>
    <span class="st-epsg">EPSG:4612</span>
    <svg class="st-bubble"><use href="#s-bubble"/></svg>
    <i class="st-size"></i>
  </footer>
</div>
</body>
</html>
```
FILE: styles.css
```css
* { box-sizing: border-box; }
html, body { margin: 0; padding: 0; }
body {
  width: 1058px;
  height: 787px;
  overflow: hidden;
  background: #d4d0c8;
  color: #000;
  font: 12px/1 "Liberation Sans", "Noto Sans CJK JP", sans-serif;
  font-feature-settings: "palt";
}
.defs { width: 0; height: 0; overflow: hidden; display: block; }
button { font: inherit; padding: 0; margin: 0; border: 0; background: none; color: inherit; }
i { display: block; font-style: normal; }

.window {
  width: 1058px;
  height: 787px;
  padding: 4px 4px 0;
  display: flex;
  flex-direction: column;
  background: #d4d0c8;
  box-shadow: inset 1px 1px 0 #d4d0c8, inset 2px 2px 0 #fff, inset -1px -1px 0 #404040, inset -2px -2px 0 #808080;
}

/* title bar */
.titlebar {
  height: 18px;
  flex: none;
  display: flex;
  align-items: center;
  padding: 0 3px;
  background: linear-gradient(90deg, #0a246a, #a6caf0);
}
.logo { width: 14px; height: 14px; margin-right: 3px; }
.title-text { color: #fff; font-weight: 700; font-size: 12px; letter-spacing: .27px; }
.wbtns { margin-left: auto; display: flex; }
.wbtn {
  width: 16px;
  height: 14px;
  background: #d4d0c8;
  box-shadow: inset -1px -1px 0 #404040, inset 1px 1px 0 #fff, inset -2px -2px 0 #808080;
  position: relative;
  display: block;
}
.wmin::after { content: ""; position: absolute; left: 4px; bottom: 3px; width: 6px; height: 2px; background: #000; }
.wmax::after { content: ""; position: absolute; left: 3px; top: 2px; width: 9px; height: 9px; border: 1px solid #000; border-top-width: 2px; }
.wclose { margin-left: 2px; }
.wx { width: 13px; height: 13px; display: block; margin: 0 0 0 1px; }

/* menu */
.menubar {
  height: 23px;
  flex: none;
  display: flex;
  align-items: center;
  gap: 16px;
  padding: 0 0 0 9px;
  border-bottom: 1px solid #a8a5a0;
  font-size: 11px;
}
.menubar span { white-space: nowrap; letter-spacing: -.8px; }
.menubar .wide { letter-spacing: 0; }
.menubar .mid { letter-spacing: -.4px; }
.menubar u { text-underline-offset: 1px; }

/* top toolbars */
.toolbar {
  height: 39px;
  flex: none;
  display: flex;
  align-items: center;
  border-bottom: 1px solid #a8a5a0;
}
.toolbar-tall { height: 40px; }
.hgrip {
  width: 6px;
  height: 30px;
  margin-left: 7px;
  margin-right: 1px;
  flex: none;
  background-image:
    conic-gradient(at 2px 2px, #0000 75%, #fff 0), conic-gradient(at 2px 2px, #0000 75%, #fff 0),
    conic-gradient(at 2px 2px, #0000 75%, #9d9a93 0), conic-gradient(at 2px 2px, #0000 75%, #9d9a93 0);
  background-size: 6px 6px;
  background-position: 0 0, 3px 3px, 1px 1px, 4px 4px;
}
.hgrip.first { margin-left: 6px; margin-right: 0; }
.hgrip.hgrip-tight { margin-left: 0; margin-right: 0; }
.tb {
  width: 35px;
  height: 34px;
  flex: none;
  display: flex;
  align-items: center;
  justify-content: center;
  position: relative;
  border: 1px solid transparent;
  border-radius: 3px;
}
.tb.on { width: 34px; margin-right: 1px; background: #b6b3ac; border-color: #84817b; }
.ic { width: 28px; height: 28px; display: block; flex: none; }
.tb-drop { width: 46px; justify-content: flex-start; padding-left: 2px; }
.tb-drop2 { width: 48px; }
.arrow { width: 0; height: 0; border: 6px solid transparent; border-top: 6px solid #000; border-bottom: 0; margin-left: 4px; flex: none; }
.tb-drop .arrow { position: absolute; left: 32px; top: 15px; margin: 0; }
.arrow-g { border-top-color: #999690; }
.tiny-arrow { position: absolute; right: 0; bottom: 3px; border: 3px solid transparent; border-top: 4px solid #555; border-bottom: 0; }
.tiny-dark { border-top-color: #000; }
.more { font-weight: 700; font-size: 13px; width: 20px; text-align: center; flex: none; }
.more-a { margin-left: 30px; }
.more-b { margin-left: 0; }
.tb-help { margin-left: 2px; }

/* main */
.main { height: 589px; flex: none; display: flex; }
.lefttools {
  width: 52px;
  flex: none;
  border-right: 1px solid #a8a5a0;
  display: flex;
  flex-direction: column;
  align-items: center;
  padding-top: 5px;
}
.tgrip {
  width: 41px;
  height: 5px;
  flex: none;
  background-image:
    conic-gradient(at 2px 2px, #0000 75%, #fff 0), conic-gradient(at 2px 2px, #0000 75%, #fff 0),
    conic-gradient(at 2px 2px, #0000 75%, #9d9a93 0), conic-gradient(at 2px 2px, #0000 75%, #9d9a93 0);
  background-size: 6px 6px;
  background-position: 0 0, 3px 3px, 1px 1px, 4px 4px;
}
.tgrip-2 { margin: 9px 0 3px; }
.lt { width: 51px; height: 34px; flex: none; display: flex; align-items: center; justify-content: center; }
.lt-s { height: 33px; }
.lt-drop { justify-content: flex-start; padding-left: 8px; }
.lt-drop .arrow { margin-left: 3px; }
.lt-more { font-weight: 700; font-size: 14px; line-height: 18px; transform: rotate(90deg); height: 18px; margin-top: 5px; }

/* docks */
.docks { width: 261px; margin-left: 1px; flex: none; display: flex; flex-direction: column; }
.dock { flex: none; }
.dock-browser { height: 149px; }
.dock-layers { height: 149px; }
.dock-route { flex: 1; }
.dock-sep {
  height: 8px;
  flex: none;
  margin: 0 91px 0 88px;
  background-image:
    conic-gradient(at 2px 2px, #0000 75%, #fff 0), conic-gradient(at 2px 2px, #0000 75%, #9d9a93 0);
  background-size: 4px 4px;
  background-position: 0 2px, 1px 3px;
  background-repeat: repeat-x;
}
.dock-title {
  height: 15px;
  display: flex;
  align-items: center;
  gap: 6px;
  padding-left: 3px;
  white-space: nowrap;
  font-size: 11px;
}
.kana { font-size: 10px; letter-spacing: -.8px; }
.dgrip {
  flex: 1;
  height: 5px;
  background-image:
    conic-gradient(at 2px 2px, #0000 75%, #fff 0), conic-gradient(at 2px 2px, #0000 75%, #fff 0),
    conic-gradient(at 2px 2px, #0000 75%, #9d9a93 0), conic-gradient(at 2px 2px, #0000 75%, #9d9a93 0);
  background-size: 6px 6px;
  background-position: 0 0, 3px 3px, 1px 1px, 4px 4px;
}
.dbtns { display: flex; gap: 2px; margin-left: -2px; margin-right: 1px; }
.dbtn {
  width: 13px;
  height: 14px;
  border: 1px solid #85827c;
  border-radius: 2px;
  background: #d4d0c8;
  display: block;
}
.dbtn svg { width: 11px; height: 12px; display: block; }

.dock-tools { display: flex; height: 42px; padding: 6px 0 0 2px; align-items: flex-start; }
.dt { width: 27px; height: 26px; flex: none; display: flex; align-items: center; justify-content: center; }
.ds { width: 18px; height: 18px; display: block; flex: none; }
.ds-w { width: 21px; height: 16px; margin: 3px 0 0 3px; }

.tree {
  height: 92px;
  background: #fff;
  border: 1px solid #9b9890;
  border-radius: 2px;
  display: flex;
  overflow: hidden;
}
.tree-rows { flex: 1; overflow: hidden; font-size: 11px; }
.row { height: 16px; display: flex; align-items: center; white-space: nowrap; }
.row-lat { font-size: 12px; letter-spacing: .8px; }
.twig { width: 24px; height: 16px; flex: none; position: relative; }
.twig::before { content: ""; position: absolute; left: 10px; top: 0; height: 16px; border-left: 1px dotted #888; }
.twig::after { content: ""; position: absolute; left: 10px; top: 8px; width: 13px; border-top: 1px dotted #888; }
.exp { position: absolute; left: 6px; top: 4px; width: 9px; height: 9px; border: 1px solid #888; background: #fff; z-index: 1; }
.exp::before { content: ""; position: absolute; left: 1px; top: 3px; width: 5px; height: 1px; background: #000; }
.exp::after { content: ""; position: absolute; left: 3px; top: 1px; width: 1px; height: 5px; background: #000; }
.folder {
  width: 13px;
  height: 15px;
  flex: none;
  margin-right: 7px;
  background: linear-gradient(90deg, #fdf3b5 0 45%, #f2c95c 45% 100%);
  border: 1px solid #e0c060;
  border-radius: 2px 2px 1px 1px;
}
.star { width: 16px; height: 16px; flex: none; margin-right: 4px; }
.vscroll { width: 16px; flex: none; display: flex; flex-direction: column; }
.sbtn, .thumb, .sb {
  display: flex;
  align-items: center;
  justify-content: center;
  background: linear-gradient(#e6e3dc, #c8c5bd);
  border: 1px solid #8d8a84;
  border-radius: 2px;
  flex: none;
}
.sbtn { height: 16px; }
.thumb { height: 26px; }
.track { flex: 1; background: repeating-conic-gradient(#d4d0c8 0 25%, #fff 0 50%) 0 0/2px 2px; }
.up { width: 0; height: 0; border: 4px solid transparent; border-bottom: 4px solid #000; border-top: 0; }
.down { width: 0; height: 0; border: 4px solid transparent; border-top: 4px solid #000; border-bottom: 0; }

.layer-tree { height: 92px; background: #fff; border: solid #0a246a; border-width: 1px 2px 2px; border-radius: 2px; }
.layer-row { height: 16px; background: #0a246a; display: flex; align-items: center; }
.layer-twig { width: 10px; height: 8px; margin: -8px 0 0 9px; border-left: 1px dotted #8fa0c8; border-bottom: 1px dotted #8fa0c8; flex: none; }
.check { width: 13px; height: 13px; flex: none; margin-left: 4px; }
.marker { width: 5px; height: 5px; border-radius: 50%; background: #8e4a5e; margin: 0 9px 0 9px; flex: none; }
.layer-name {
  flex: 1;
  height: 16px;
  line-height: 15px;
  padding-left: 2px;
  margin-right: 1px;
  color: #fff;
  font-weight: 700;
  letter-spacing: .6px;
  text-decoration: underline;
  outline: 1px dotted #e8d870;
  outline-offset: -1px;
}

/* route form */
.route { padding: 10px 8px 0; display: flex; flex-direction: column; }
.f-label { height: 16px; line-height: 18px; display: block; }
.f-label2 { margin-top: 5px; }
.pick-row { display: flex; justify-content: space-between; align-items: center; height: 25px; margin-top: 3px; }
.field { height: 20px; border: 1px solid #9b9890; border-radius: 2px; background: #fff; padding: 0 3px; font: inherit; display: block; outline: none; min-width: 0; }
.pick-row .field { width: 212px; }
.btn {
  display: flex;
  align-items: center;
  justify-content: center;
  background: linear-gradient(#dcd9d2, #c6c3bb);
  border: 1px solid #85827c;
  border-radius: 2px;
}
.btn-kana { font-size: 11px; letter-spacing: -.6px; }
.pick { width: 26px; height: 25px; flex: none; }
.pk { width: 20px; height: 20px; }
.crit-row { display: flex; justify-content: space-between; align-items: center; height: 20px; margin-top: 8px; }
.combo {
  display: flex;
  height: 20px;
  border: 1px solid #9b9890;
  border-radius: 2px;
  align-items: stretch;
}
.combo-crit { width: 120px; background: linear-gradient(#dcd9d2, #c6c3bb); }
.combo-text { flex: 1; line-height: 18px; padding-left: 3px; }
.combo-arrow { width: 16px; border-left: 1px solid #9b9890; display: flex; align-items: center; justify-content: center; background: linear-gradient(#dcd9d2, #c6c3bb); }
.val-row { display: flex; align-items: center; height: 20px; margin-top: 7px; white-space: nowrap; }
.val-row .field { flex: 1; }
.val-a { width: 25px; flex: none; }
.val-b { width: 29px; flex: none; }
.btn-row { display: flex; gap: 10px; margin-top: 9px; }
.btn-row .btn { width: 75px; height: 23px; }
.btn-help { height: 26px; margin-top: 9px; gap: 3px; font-size: 11px; }
.buoy { width: 18px; height: 18px; }

.splitter { width: 8px; flex: none; padding: 197px 0 0 1px; }
.vgrip {
  width: 6px;
  height: 191px;
  background-image:
    conic-gradient(at 2px 2px, #0000 75%, #fff 0), conic-gradient(at 2px 2px, #0000 75%, #9d9a93 0);
  background-size: 4px 4px;
  background-position: 2px 0, 3px 1px;
  background-repeat: repeat-y;
}

.canvas { width: 728px; flex: none; background: #fff; border: 1px solid #9b9890; border-radius: 2px; overflow: hidden; }
.map { width: 727px; height: 589px; display: block; margin: -1px 0 0 -1px; }
.pts circle { fill: #914b60; stroke: #1c1c1c; stroke-width: 1.1; }

/* status bar */
.status {
  flex: none;
  height: 31px;
  display: grid;
  grid-template-columns: 22px 44px 299px 43px 82px 45px 98px 19px 51px 19px 79px 44px 9px;
  align-items: center;
  padding-left: 196px;
}
.st-toggle { width: 21px; height: 21px; }
.st-icon { width: 18px; height: 18px; }
.st-label { white-space: nowrap; }
.st-label-a { padding-left: 7px; }
.st-label-b { padding-left: 10px; }
.st-label-c { padding-left: 8px; }
.st-label-d { padding-left: 5px; font-size: 11px; letter-spacing: -.5px; }
.st-coord { height: 20px; line-height: 18px; background: #fff; border: 1px solid #9b9890; border-radius: 2px; text-align: center; font-size: 11px; letter-spacing: -.1px; }
.combo-scale { background: #fff; height: 21px; }
.combo-scale .combo-text { line-height: 19px; padding-left: 2px; white-space: nowrap; font-size: 11px; }
.spin { display: flex; height: 24px; background: #fff; border: 1px solid #9b9890; border-radius: 2px; }
.spin-val { flex: 1; line-height: 22px; padding-left: 4px; font-size: 11px; }
.spin-btns { width: 16px; display: flex; flex-direction: column; }
.sb { flex: 1; border-width: 0 0 1px 1px; border-radius: 0; }
.st-check { width: 13px; height: 13px; margin-left: 6px; }
.st-crs { width: 16px; height: 16px; }
.st-epsg { white-space: nowrap; font-size: 11px; }
.st-bubble { width: 18px; height: 18px; margin-left: 7px; }
.st-size { width: 9px; height: 9px; align-self: end; margin-bottom: 6px; background: repeating-linear-gradient(135deg, #fff 0 1px, #8d8a84 1px 2px, #d4d0c8 2px 4px); clip-path: polygon(100% 0, 100% 100%, 0 100%); }

/* svg text */
.svgt { text-anchor: middle; font-family: "Liberation Sans", sans-serif; }
.g11 { font-size: 10px; font-weight: 700; fill: #9c9a95; }
.it { font: italic 700 15px "Liberation Serif", serif; fill: #fff; }
.it2 { font: italic 700 14px "Liberation Serif", serif; fill: #fff; }
.ex { font: 30px "Liberation Serif", serif; fill: #6d3a78; }
.hq { font-size: 14px; fill: #fff; }
.lb { font-size: 10px; font-weight: 700; fill: #111; }
.ls { font-size: 8px; font-weight: 700; fill: #333; }
.lg { font-size: 8px; font-weight: 700; fill: #999; }
.cs { font-size: 8px; font-weight: 700; fill: #555; }
.wk { font-weight: 700; }
.wk1 { font-size: 15px; fill: #000; }
.wk2 { font-size: 14px; fill: #f01818; }
.wk3 { font-size: 12px; fill: #000; }
```
